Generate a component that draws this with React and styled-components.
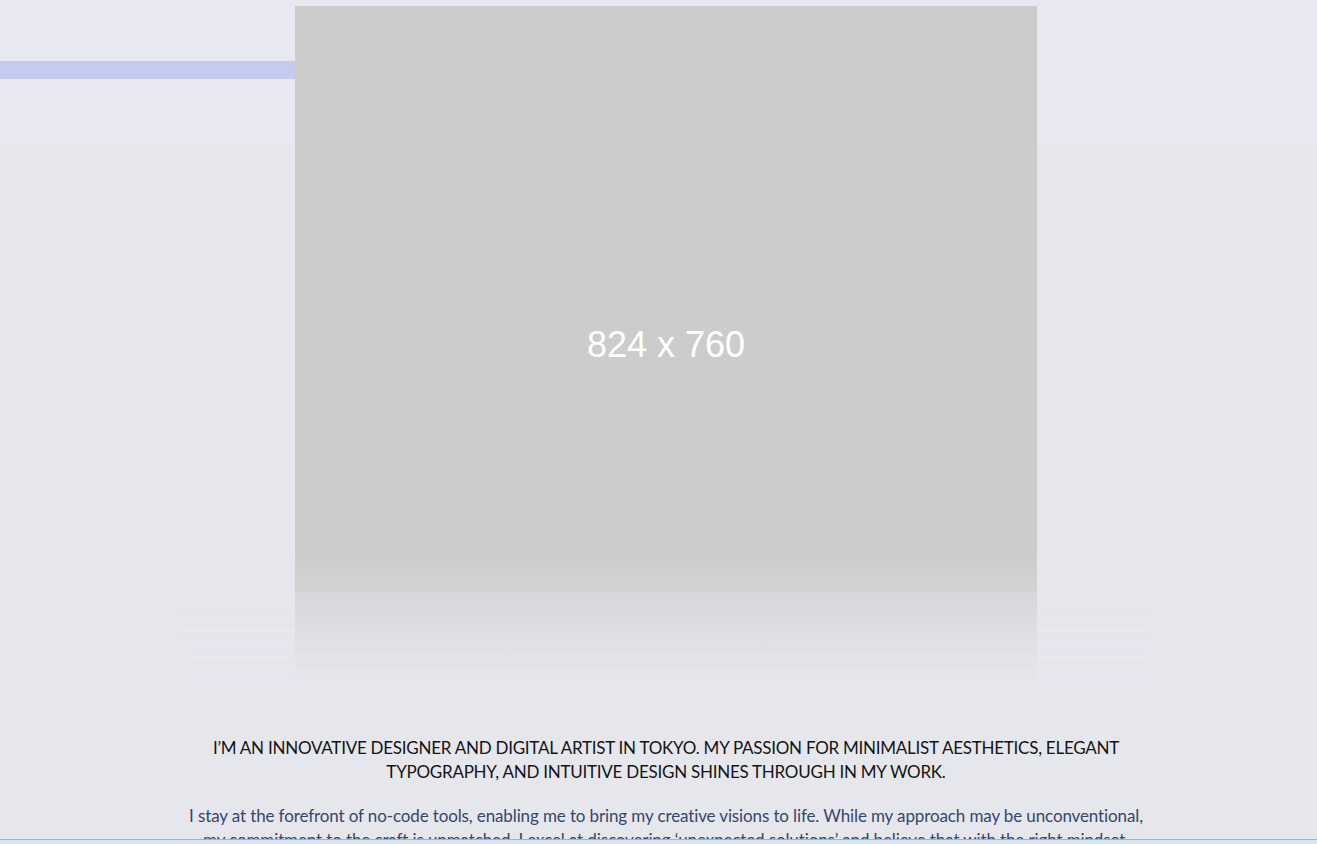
import React from 'react';
import styled, { createGlobalStyle } from 'styled-components';

const Global = createGlobalStyle`
  html, body {
    margin: 0;
    padding: 0;
    background: #e6e7ed;
    overflow: hidden;
  }
  body {
    font-family: 'Lato', 'Open Sans', sans-serif;
  }
`;

const Page = styled.div`
  position: relative;
  min-height: 844px;
  padding: 6px 0 0 15px;
  box-sizing: border-box;
`;

const Header = styled.header`
  position: absolute;
  top: 0;
  left: 0;
  right: 0;
  height: 145px;
  background: rgba(234, 235, 250, 0.3);
  z-index: 0;
`;

const AccentBar = styled.div`
  margin-top: 61px;
  width: 295px;
  height: 18px;
  background: #c5cbee;
`;

const Hero = styled.section`
  position: relative;
  z-index: 1;
  display: flex;
  flex-direction: column;
  align-items: center;
`;

const Placeholder = styled.div`
  position: relative;
  width: 742px;
  height: 684px;
  background: #cccccc;
  display: flex;
  align-items: center;
  justify-content: center;

  &::after {
    content: '';
    position: absolute;
    left: 0;
    right: 0;
    bottom: 0;
    height: 135px;
    background: linear-gradient(180deg, rgba(230, 231, 237, 0) 0%, rgba(230, 231, 237, 0.55) 55%, rgba(230, 231, 237, 1) 100%);
  }
`;

const PlaceholderLabel = styled.span`
  font-family: 'Liberation Sans', Arial, sans-serif;
  font-size: 36px;
  color: #ffffff;
  margin-top: -6px;
`;

const Frost = styled.div`
  position: absolute;
  z-index: 2;
  left: 50%;
  bottom: 0;
  transform: translateX(-50%);
  width: 966px;
  height: 98px;
  background: linear-gradient(180deg, rgba(234, 235, 241, 0.15) 0%, rgba(234, 235, 241, 0.35) 100%);
  display: flex;
  flex-direction: column;
  gap: 10px;
  padding-top: 18px;
  box-sizing: border-box;
  overflow: hidden;
`;

const FrostLine = styled.div`
  height: 3px;
  background: rgba(218, 220, 228, 0.18);
  filter: blur(1px);
`;

const Intro = styled.div`
  width: 966px;
  margin: 46px auto 0;
  text-align: center;
`;

const Lead = styled.h2`
  margin: 0;
  font-family: 'Lato', sans-serif;
  font-weight: 400;
  font-size: 17px;
  letter-spacing: -0.25px;
  line-height: 24px;
  color: #141414;
  text-transform: uppercase;
`;

const Body = styled.p`
  margin: 20px 0 0;
  font-family: 'Lato', sans-serif;
  font-weight: 400;
  font-size: 17px;
  letter-spacing: -0.12px;
  line-height: 24px;
  color: #34466e;
`;

const BottomBar = styled.div`
  position: fixed;
  left: 0;
  right: 0;
  bottom: 0;
  height: 4px;
  background: #d3e5ee;
  border-top: 1px solid #a7b3c0;
  z-index: 5;
`;

export default function App() {
  return (
    <>
      <Global />
      <Page>
        <Header>
          <AccentBar />
        </Header>
        <Hero>
          <Placeholder>
            <PlaceholderLabel>824 x 760</PlaceholderLabel>
          </Placeholder>
          <Frost>
            {[0, 1, 2, 3, 4, 5].map((i) => (
              <FrostLine key={i} />
            ))}
          </Frost>
        </Hero>
        <Intro>
          <Lead>
            I’m an innovative designer and digital artist in Tokyo. My passion for minimalist aesthetics, elegant
            typography, and intuitive design shines through in my work.
          </Lead>
          <Body>
            I stay at the forefront of no-code tools, enabling me to bring my creative visions to life. While my
            approach may be unconventional, my commitment to the craft is unmatched. I excel at discovering
            ‘unexpected solutions’ and believe that with the right mindset, anything is possible.
          </Body>
        </Intro>
        <BottomBar />
      </Page>
    </>
  );
}
